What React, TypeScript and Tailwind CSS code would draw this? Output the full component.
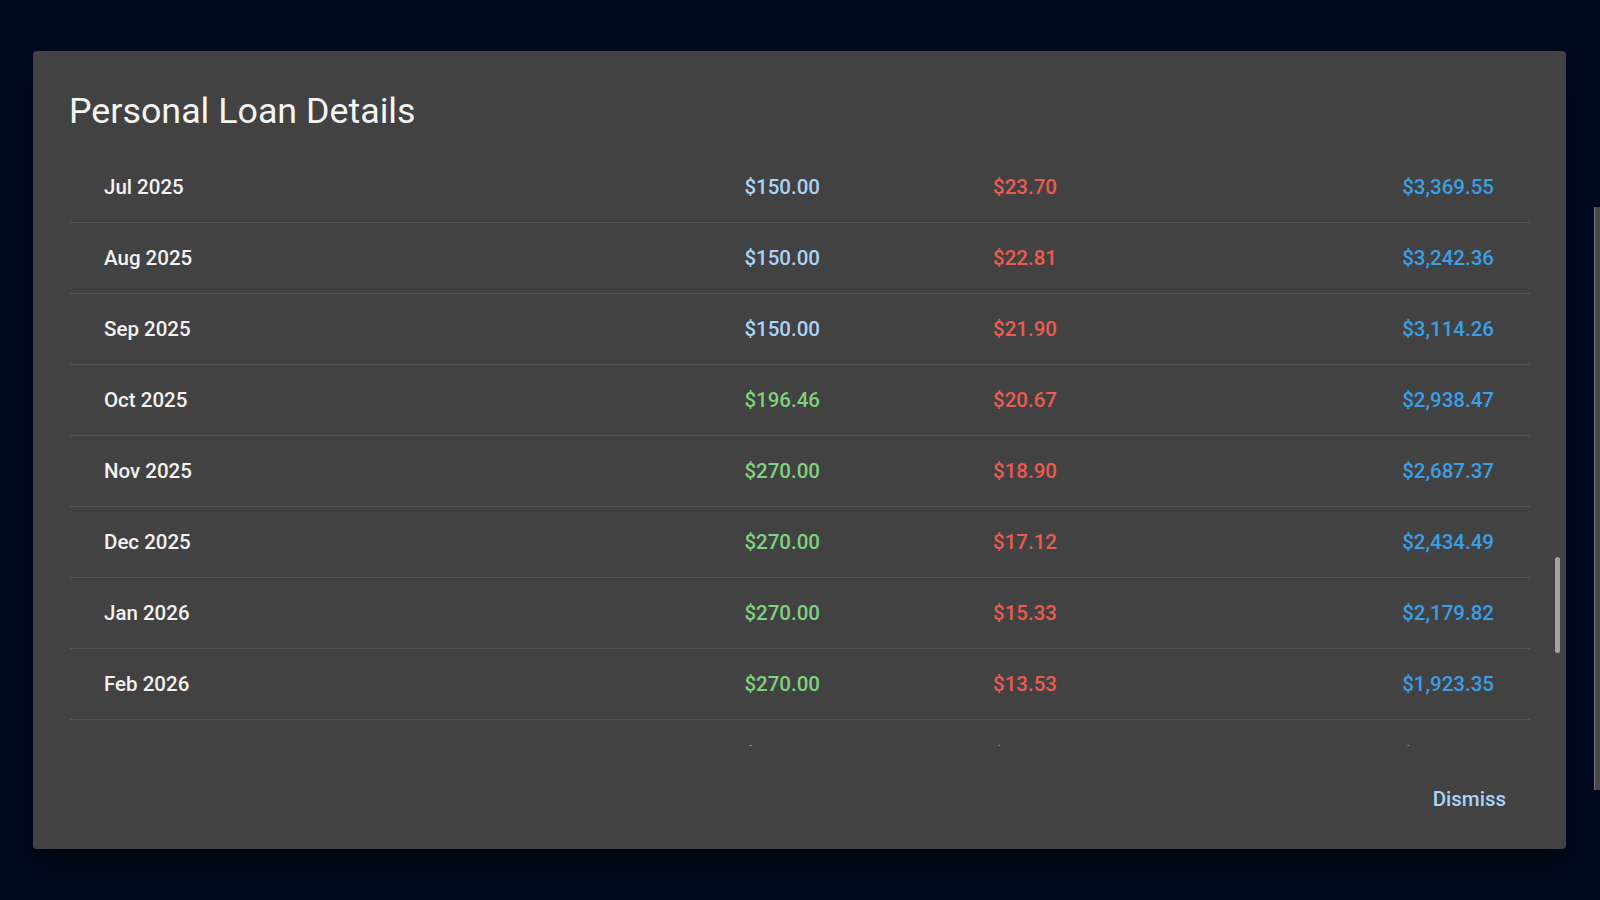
import React from 'react';

type Row = { month: string; payment: string; interest: string; balance: string; extra: boolean };

const rows: Row[] = [
  { month: 'Jul 2025', payment: '$150.00', interest: '$23.70', balance: '$3,369.55', extra: false },
  { month: 'Aug 2025', payment: '$150.00', interest: '$22.81', balance: '$3,242.36', extra: false },
  { month: 'Sep 2025', payment: '$150.00', interest: '$21.90', balance: '$3,114.26', extra: false },
  { month: 'Oct 2025', payment: '$196.46', interest: '$20.67', balance: '$2,938.47', extra: true },
  { month: 'Nov 2025', payment: '$270.00', interest: '$18.90', balance: '$2,687.37', extra: true },
  { month: 'Dec 2025', payment: '$270.00', interest: '$17.12', balance: '$2,434.49', extra: true },
  { month: 'Jan 2026', payment: '$270.00', interest: '$15.33', balance: '$2,179.82', extra: true },
  { month: 'Feb 2026', payment: '$270.00', interest: '$13.53', balance: '$1,923.35', extra: true },
  { month: 'Mar 2026', payment: '$270.00', interest: '$11.71', balance: '$1,665.06', extra: true },
  { month: 'Apr 2026', payment: '$270.00', interest: '$10.15', balance: '$1,405.21', extra: true },
];

export default function App() {
  return (
    <div className="relative h-screen w-full overflow-hidden bg-[#010a1f] pl-[33px] pt-[51px] font-['Roboto',sans-serif]">
      {/* page scrollbar peeking from behind the overlay */}
      <div className="absolute left-[1594px] top-[207px] h-[583px] w-[6px] border-l border-[#7a7a7a] bg-[#4b4b4b]" />

      <div className="relative flex h-[798px] w-[1533px] flex-col rounded-[4px] bg-[#424242] shadow-[0_11px_15px_-7px_rgba(0,0,0,0.4),0_24px_38px_3px_rgba(0,0,0,0.3)]">
        <h2 className="pl-[36px] pt-[39px] text-[35.8px] leading-[42px] font-normal text-[#f5f5f5]">Personal Loan Details</h2>

        <div className="mt-[20px] ml-[37px] mr-[36px] h-[594px] overflow-hidden">
          {rows.map((r) => (
            <div
              key={r.month}
              className="grid h-[71px] grid-cols-[516px_200px_237px_437px] items-center border-b border-[#545454] pl-[34px] pr-[36px] text-[20.5px] font-medium"
            >
              <span className="text-[#f2f2f2]">{r.month}</span>
              <span className={r.extra ? 'text-right text-[#7fd17f]' : 'text-right text-[#a9d4f7]'}>{r.payment}</span>
              <span className="text-right text-[#ec5b50]">{r.interest}</span>
              <span className="text-right text-[#3a9fe6]">{r.balance}</span>
            </div>
          ))}
        </div>

        {/* scroll thumb */}
        <div className="absolute left-[1522px] top-[506px] h-[96px] w-[5px] rounded-full bg-[#a3a3a3]" />

        <div className="flex flex-1 items-center justify-end pr-[60px] pt-[4px]">
          <button className="text-[20.5px] font-medium text-[#a9d4f7]">Dismiss</button>
        </div>
      </div>
    </div>
  );
}
